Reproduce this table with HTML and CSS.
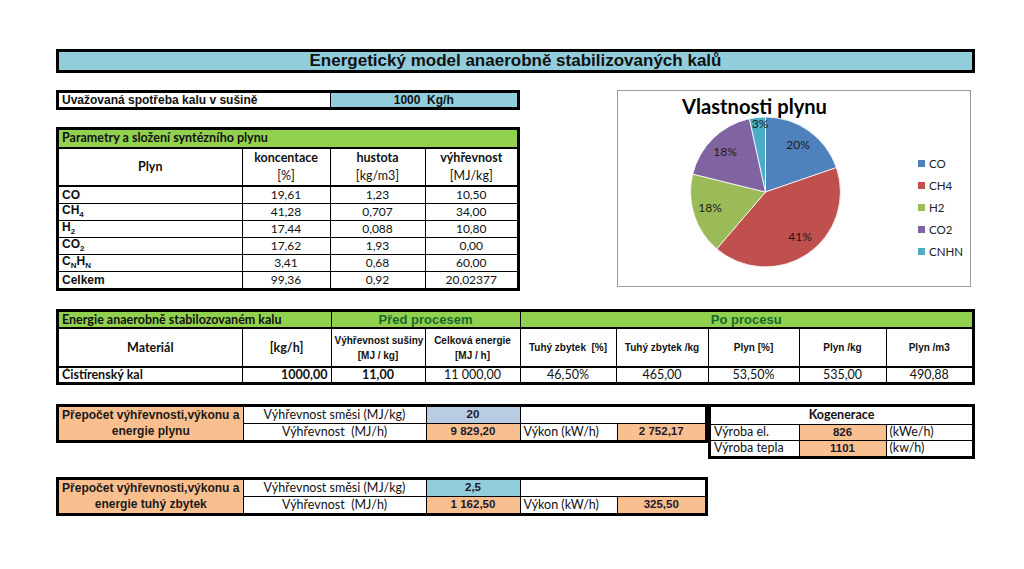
FILE: index.html
```html
<!DOCTYPE html>
<html lang="cs">
<head>
<meta charset="utf-8">
<title>Energetický model</title>
<link rel="stylesheet" href="styles.css">
</head>
<body>
<div class="page">
  <div class="title">Energetický model anaerobně stabilizovaných kalů</div>

  <div class="top">
    <div class="left">
      <div class="box">
        <table class="grid usage">
          <colgroup><col class="u1"><col class="u2"></colgroup>
          <tr>
            <td class="arial-b">Uvažovaná spotřeba kalu v sušině</td>
            <td class="arial-b center cyan">1000&nbsp; Kg/h</td>
          </tr>
        </table>
      </div>

      <div class="box">
        <table class="grid params">
          <colgroup><col class="p1"><col class="p2"><col class="p3"><col class="p4"></colgroup>
          <tr class="green-row">
            <td colspan="4" class="green cal-b gtitle">Parametry a složení syntézního plynu</td>
          </tr>
          <tr class="head-row">
            <td class="cal-b center big">Plyn</td>
            <td class="center big"><span class="cal-b">koncentace</span><br>[%]</td>
            <td class="center big"><span class="cal-b">hustota</span><br>[kg/m3]</td>
            <td class="center big"><span class="cal-b">výhřevnost</span><br>[MJ/kg]</td>
          </tr>
          <tr class="first-data"><td class="arial-b">CO</td><td class="center">19,61</td><td class="center">1,23</td><td class="center">10,50</td></tr>
          <tr><td class="arial-b">CH<span class="sub">4</span></td><td class="center">41,28</td><td class="center">0,707</td><td class="center">34,00</td></tr>
          <tr><td class="arial-b">H<span class="sub">2</span></td><td class="center">17,44</td><td class="center">0,088</td><td class="center">10,80</td></tr>
          <tr><td class="arial-b">CO<span class="sub">2</span></td><td class="center">17,62</td><td class="center">1,93</td><td class="center">0,00</td></tr>
          <tr><td class="arial-b">C<span class="sub">N</span>H<span class="sub">N</span></td><td class="center">3,41</td><td class="center">0,68</td><td class="center">60,00</td></tr>
          <tr><td class="arial-b">Celkem</td><td class="center">99,36</td><td class="center">0,92</td><td class="center">20,02377</td></tr>
        </table>
      </div>
    </div>

    <div class="chart">
      <svg width="352" height="195" viewBox="0 0 352 195" xmlns="http://www.w3.org/2000/svg">
        <g stroke="#ffffff" stroke-width="0.8">
          <path d="M147.5,101 L147.5,26 A75,75 0 0,1 218.4,76.6 Z" fill="#4f81bd"/>
          <path d="M147.5,101 L218.4,76.6 A75,75 0 0,1 98.7,157.9 Z" fill="#c0504d"/>
          <path d="M147.5,101 L98.7,157.9 A75,75 0 0,1 74.7,83.1 Z" fill="#9bbb59"/>
          <path d="M147.5,101 L74.7,83.1 A75,75 0 0,1 131.4,27.7 Z" fill="#8064a2"/>
          <path d="M147.5,101 L131.4,27.7 A75,75 0 0,1 147.5,26 Z" fill="#4bacc6"/>
        </g>
        <text x="64" y="23" class="chart-title" textLength="145" lengthAdjust="spacingAndGlyphs">Vlastnosti plynu</text>
        <g class="pct">
          <text x="180" y="58">20%</text>
          <text x="182" y="150">41%</text>
          <text x="92" y="121">18%</text>
          <text x="107" y="65">18%</text>
          <text x="142" y="37">3%</text>
        </g>
        <g class="legend">
          <rect x="300" y="69" width="7" height="7" fill="#4f81bd"/>
          <text x="311" y="77">CO</text>
          <rect x="300" y="91" width="7" height="7" fill="#c0504d"/>
          <text x="311" y="99">CH4</text>
          <rect x="300" y="113" width="7" height="7" fill="#9bbb59"/>
          <text x="311" y="121">H2</text>
          <rect x="300" y="135" width="7" height="7" fill="#8064a2"/>
          <text x="311" y="143">CO2</text>
          <rect x="300" y="157" width="7" height="7" fill="#4bacc6"/>
          <text x="311" y="165">CNHN</text>
        </g>
      </svg>
    </div>
  </div>

  <div class="box energy-box">
    <table class="grid energy">
      <colgroup>
        <col class="e1"><col class="e2"><col class="e3"><col class="e4"><col class="e5">
        <col class="e6"><col class="e7"><col class="e8"><col class="e9">
      </colgroup>
      <tr class="green-row">
        <td colspan="2" class="green cal-b gtitle">Energie anaerobně stabilozovaném kalu</td>
        <td colspan="2" class="green arial-b center dkgreen">Před procesem</td>
        <td colspan="5" class="green arial-b center dkgreen">Po procesu</td>
      </tr>
      <tr class="ehead-row">
        <td class="cal-b center big">Materiál</td>
        <td class="cal-b center big">[kg/h]</td>
        <td class="arial-b center small">Výhřevnost sušiny<br>[MJ / kg]</td>
        <td class="arial-b center small">Celková energie<br>[MJ / h]</td>
        <td class="arial-b center small">Tuhý zbytek&nbsp; [%]</td>
        <td class="arial-b center small">Tuhý zbytek /kg</td>
        <td class="arial-b center small">Plyn [%]</td>
        <td class="arial-b center small">Plyn /kg</td>
        <td class="arial-b center small">Plyn /m3</td>
      </tr>
      <tr class="edata-row">
        <td class="cal-b big">Čistírenský kal</td>
        <td class="cal-b right big">1000,00</td>
        <td class="cal-b center big">11,00</td>
        <td class="center big">11 000,00</td>
        <td class="center big">46,50%</td>
        <td class="center big">465,00</td>
        <td class="center big">53,50%</td>
        <td class="center big">535,00</td>
        <td class="center big">490,88</td>
      </tr>
    </table>
  </div>

  <div class="bottom">
    <div class="box calc-box">
      <table class="grid calc">
        <colgroup><col class="k1"><col class="k2"><col class="k3"><col class="k4"><col class="k5"></colgroup>
        <tr>
          <td rowspan="2" class="orange arial-b center lbl">Přepočet výhřevnosti,výkonu a<br>energie plynu</td>
          <td class="center big">Výhřevnost směsi (MJ/kg)</td>
          <td class="paleblue arial-b center val">20</td>
          <td colspan="2"></td>
        </tr>
        <tr>
          <td class="center big">Výhřevnost&nbsp; (MJ/h)</td>
          <td class="orange arial-b center val">9 829,20</td>
          <td class="big">Výkon (kW/h)</td>
          <td class="orange arial-b center val">2 752,17</td>
        </tr>
      </table>
    </div>

    <div class="box kog-box">
      <table class="grid kog">
        <colgroup><col class="g1"><col class="g2"><col class="g3"></colgroup>
        <tr><td colspan="3" class="cal-b center big">Kogenerace</td></tr>
        <tr><td class="big">Výroba el.</td><td class="orange arial-b center val">826</td><td class="big">(kWe/h)</td></tr>
        <tr><td class="big">Výroba tepla</td><td class="orange arial-b center val">1101</td><td class="big">(kw/h)</td></tr>
      </table>
    </div>
  </div>

  <div class="box calc-box second">
    <table class="grid calc">
      <colgroup><col class="k1"><col class="k2"><col class="k3"><col class="k4"><col class="k5"></colgroup>
      <tr>
        <td rowspan="2" class="orange arial-b center lbl">Přepočet výhřevnosti,výkonu a<br>energie tuhý zbytek</td>
        <td class="center big">Výhřevnost směsi (MJ/kg)</td>
        <td class="cyan arial-b center val">2,5</td>
        <td colspan="2"></td>
      </tr>
      <tr>
        <td class="center big">Výhřevnost&nbsp; (MJ/h)</td>
        <td class="orange arial-b center val">1 162,50</td>
        <td class="big">Výkon (kW/h)</td>
        <td class="orange arial-b center val">325,50</td>
      </tr>
    </table>
  </div>
</div>
</body>
</html>
```

FILE: styles.css
```css
* { box-sizing: border-box; }

body {
  margin: 0;
  background: #ffffff;
  color: #000000;
  font-family: "Liberation Sans", Arial, sans-serif;
}

.page {
  width: 1024px;
  padding: 49px 0 0 56px;
}

.title {
  width: 919px;
  height: 24px;
  border: 3px solid #000;
  background: #92cddc;
  text-align: center;
  font-weight: bold;
  font-size: 17px;
  line-height: 18px;
  color: #111;
}

.top {
  display: flex;
  margin-top: 17px;
}

.left {
  width: 464px;
  display: flex;
  flex-direction: column;
  gap: 17px;
}

.chart {
  margin-left: 97px;
  width: 354px;
  height: 197px;
  border: 1px solid #9a9a9a;
}

.chart svg { display: block; }

.chart-title {
  font-family: Lato, "Liberation Sans", sans-serif;
  font-weight: bold;
  font-size: 20px;
  fill: #000;
}

.pct text {
  font-family: Lato, "Liberation Sans", sans-serif;
  font-size: 12px;
  fill: #1a1a1a;
  text-anchor: middle;
}

.legend text {
  font-family: Lato, "Liberation Sans", sans-serif;
  font-size: 11.5px;
  fill: #222;
}

.box {
  border: 3px solid #000;
  background: #fff;
}

table.grid {
  border-collapse: collapse;
  border-style: hidden;
  table-layout: fixed;
  width: 100%;
}

.grid td {
  border: 1px solid #000;
  padding: 0 3px;
  font-family: Lato, "Liberation Sans", sans-serif;
  font-size: 12px;
  line-height: 1;
  white-space: nowrap;
  overflow: hidden;
  color: #111;
}

.grid td.arial-b,
.arial-b {
  font-family: "Liberation Sans", Arial, sans-serif;
  font-weight: bold;
}

.grid td.cal-b,
.cal-b {
  font-family: Lato, "Liberation Sans", sans-serif;
  font-weight: bold;
}

.center { text-align: center; }
.right { text-align: right; }

.grid td.big { font-size: 12.5px; }
.grid td.small { font-size: 10px; line-height: 1.5; }
.grid td.gtitle { font-size: 12.5px; }

.cyan { background: #92cddc; }
.green { background: #92d050; }
.orange { background: #fabf8f; }
.paleblue { background: #b8cce4; }
.grid td.dkgreen { color: #17692a; font-size: 13px; }

.sub {
  font-size: 8px;
  vertical-align: -3px;
}

/* usage row */
.usage tr { height: 14px; }
.u1 { width: 271px; }
.u2 { width: 187px; }

/* params table */
.p1 { width: 183px; }
.p2 { width: 88px; }
.p3 { width: 95px; }
.p4 { width: 92px; }
.params tr { height: 17px; }
.params tr.green-row { height: 18px; }
.params tr.green-row td { border-bottom-width: 2px; }
.params tr.head-row { height: 36px; }
.params tr.head-row td { line-height: 1.45; border-bottom-width: 2px; }

/* energy table */
.energy-box { width: 919px; margin-top: 18px; }
.e1 { width: 183px; }
.e2 { width: 89px; }
.e3 { width: 94px; }
.e4 { width: 95px; }
.e5 { width: 96px; }
.e6 { width: 92px; }
.e7 { width: 91px; }
.e8 { width: 87px; }
.e9 { width: 86px; }
.energy tr.green-row { height: 16px; }
.energy tr.green-row td { border-bottom-width: 2px; }
.energy tr.ehead-row { height: 39px; }
.energy tr.ehead-row td { border-bottom-width: 2px; }
.energy tr.edata-row { height: 15px; }

/* bottom */
.bottom {
  display: flex;
  align-items: flex-start;
  margin-top: 19px;
}

.calc-box { width: 652px; }
.calc-box.second { margin-top: 18px; }
.k1 { width: 184px; }
.k2 { width: 183px; }
.k3 { width: 94px; }
.k4 { width: 97px; }
.k5 { width: 88px; }
.calc tr { height: 15px; }
.grid td.lbl { font-size: 12px; line-height: 1.35; color: #1a1a1a; padding: 0 1px; }
.grid td.val { font-size: 11.5px; color: #1a1a2e; }

.kog-box { width: 267px; }
.g1 { width: 88px; }
.g2 { width: 87px; }
.g3 { width: 86px; }
.kog tr { height: 16px; }
.kog tr:first-child { height: 17px; }
```
